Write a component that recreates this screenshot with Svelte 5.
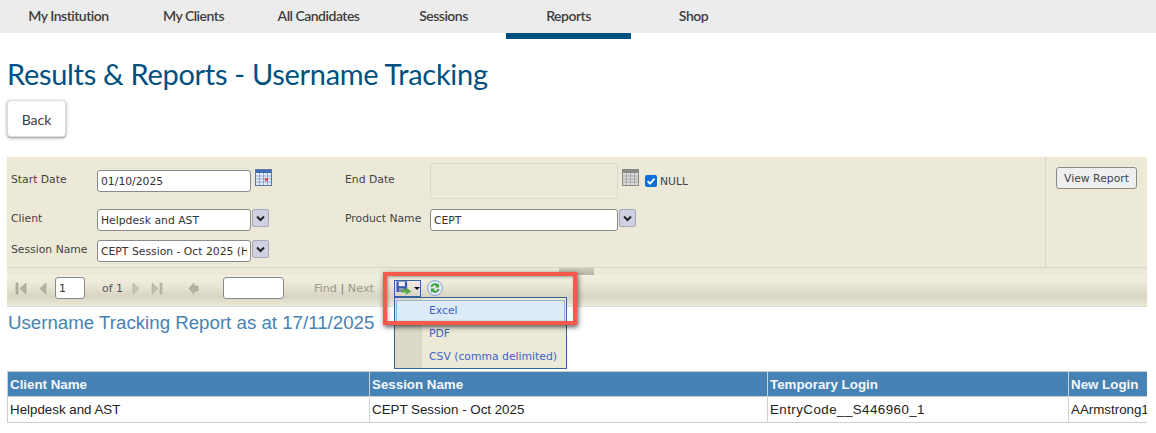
<script>
	const tabs = ['My Institution', 'My Clients', 'All Candidates', 'Sessions', 'Reports', 'Shop'];
	const active = 'Reports';
	const columns = [
		{ name: 'Client Name', width: 362, value: 'Helpdesk and AST' },
		{ name: 'Session Name', width: 398, value: 'CEPT Session - Oct 2025' },
		{ name: 'Temporary Login', width: 301, value: 'EntryCode__S446960_1' },
		{ name: 'New Login', width: 79, value: 'AArmstrong1' }
	];
</script>

{#snippet calendar(grey)}
	<svg class="cal" width="17" height="17" viewBox="0 0 17 17">
		<rect x="0.5" y="0.5" width="16" height="16" fill={grey ? '#ddd' : '#e8eefa'} stroke={grey ? '#888' : '#5a78a8'} />
		<rect x="1" y="1" width="15" height="3" fill={grey ? '#8a8a8a' : '#3f6db5'} />
		<path d="M1 7h15M1 10h15M1 13h15M4.5 4v12M8.5 4v12M12.5 4v12" stroke={grey ? '#a8a8a8' : '#8fa8d4'} fill="none" />
		{#if !grey}<rect x="10" y="9" width="3" height="3" fill="#d9534f" />{/if}
	</svg>
{/snippet}

{#snippet dropdown()}
	<span class="drop">
		<svg width="9" height="7" viewBox="0 0 9 7"><path d="M1 1.500l3.500 3.500L8 1.500" fill="none" stroke="#222" stroke-width="2" /></svg>
	</span>
{/snippet}

<header class="tabs">
	{#each tabs as tab}
		<a class="tab" class:active={tab === active} href="#top">{tab}</a>
	{/each}
</header>

<h1>Results &amp; Reports - Username Tracking</h1>
<button class="back">Back</button>

<section class="report">
	<div class="params">
		<div class="grid">
			<span class="lbl">Start Date</span>
			<div class="cell">
				<input class="field" value="01/10/2025" />
				{@render calendar(false)}
			</div>
			<span class="lbl">End Date</span>
			<div class="cell">
				<input class="field tall" disabled />
				{@render calendar(true)}
				<span class="check">
					<svg width="12" height="12" viewBox="0 0 12 12"><rect width="12" height="12" rx="2" fill="#0a6fd6" /><path d="M2.500 6.200l2.500 2.500 4.500-5" fill="none" stroke="#fff" stroke-width="1.800" /></svg>
					NULL
				</span>
			</div>

			<span class="lbl">Client</span>
			<div class="cell tight">
				<input class="field" value="Helpdesk and AST" />
				{@render dropdown()}
			</div>
			<span class="lbl">Product Name</span>
			<div class="cell tight">
				<input class="field" value="CEPT" />
				{@render dropdown()}
			</div>

			<span class="lbl">Session Name</span>
			<div class="cell tight">
				<input class="field" value="CEPT Session - Oct 2025 (Helpdesk)" />
				{@render dropdown()}
			</div>
		</div>
		<div class="submit">
			<button class="view">View Report</button>
		</div>
	</div>

	<div class="split"><span class="handle"></span></div>

	<div class="toolbar">
		<svg class="nav first" width="12" height="13" viewBox="0 0 12 13"><path d="M1 1h2v11H1zM11 1v11L5 6.500z" fill="#b4b2a6" stroke="#9c9a8e" stroke-width=".6" /></svg>
		<svg class="nav prev" width="8" height="13" viewBox="0 0 8 13"><path d="M7 1v11L1 6.500z" fill="#b4b2a6" stroke="#9c9a8e" stroke-width=".6" /></svg>
		<input class="page" value="1" />
		<span class="of">of 1</span>
		<svg class="nav next" width="8" height="13" viewBox="0 0 8 13"><path d="M1 1v11L7 6.500z" fill="#c8c6ba" stroke="#a8a69a" stroke-width=".6" /></svg>
		<svg class="nav last" width="12" height="13" viewBox="0 0 12 13"><path d="M1 1v11L7 6.500zM9 1h2v11H9z" fill="#c0beb2" stroke="#a8a69a" stroke-width=".6" /></svg>
		<svg class="nav backarrow" width="11" height="13" viewBox="0 0 11 13"><path d="M6 1L1 6.500 6 12V9h4V4H6z" fill="#b4b2a6" stroke="#9c9a8e" stroke-width=".6" /></svg>
		<input class="find" />
		<span class="findnext">Find <b>|</b> Next</span>
		<span class="export">
			<svg width="18" height="16" viewBox="0 0 18 16">
				<rect x="0.5" y="0.5" width="12" height="12" fill="#3a55b4" />
				<rect x="3" y="1" width="7" height="5" fill="#eeeef6" />
				<rect x="3" y="8" width="6" height="4" fill="#8d94b8" />
				<path d="M6 9.500h5V7l6 5-6 4v-3H6z" fill="#5aa84a" />
			</svg>
			<i class="caret"></i>
		</span>
		<svg class="refresh" width="16" height="16" viewBox="0 0 16 16">
			<circle cx="8" cy="8" r="7.500" fill="#dfe8f6" stroke="#8aa4cf" />
			<path d="M3.500 7a4.500 4.500 0 0 1 7.500-2.500l1-1v4h-4l1.400-1.400A2.800 2.800 0 0 0 5.300 7z" fill="#3fa03a" />
			<path d="M12.500 9a4.500 4.500 0 0 1-7.500 2.500l-1 1v-4h4l-1.400 1.400A2.800 2.800 0 0 0 10.700 9z" fill="#3fa03a" />
		</svg>
	</div>

	<h2>Username Tracking Report as at 17/11/2025</h2>

	<div class="tablewrap">
		<table>
			<thead>
				<tr>
					{#each columns as col}
						<th style="width: {col.width}px">{col.name}</th>
					{/each}
				</tr>
			</thead>
			<tbody>
				<tr>
					{#each columns as col}
						<td>{col.value}</td>
					{/each}
				</tr>
			</tbody>
		</table>
	</div>

	<ul class="menu">
		<li class="hover">Excel</li>
		<li>PDF</li>
		<li>CSV (comma delimited)</li>
	</ul>
	<div class="callout"></div>
</section>

<style>
	:global(body) {
		margin: 0;
		background: #fff;
		overflow: hidden;
	}

	.tabs {
		display: flex;
		height: 33px;
		padding-left: 6px;
		background: #ececec;
	}

	.tab {
		width: 125px;
		text-align: center;
		font: 600 14px/32px Lato, "Noto Sans", sans-serif;
		letter-spacing: -0.5px;
		color: #3d3d3d;
		text-decoration: none;
	}

	.tab.active {
		box-shadow: 0 6px 0 #00507f;
	}

	h1 {
		margin: 22px 0 0 7px;
		height: 45px;
		font: 400 29px/38px Lato, "Noto Sans", sans-serif;
		letter-spacing: -0.3px;
		color: #00507f;
	}

	.back {
		display: block;
		box-sizing: border-box;
		width: 59px;
		height: 37px;
		margin-left: 7px;
		padding: 2px 0 0;
		background: #fff;
		border: 1px solid #ddd;
		border-radius: 4px;
		box-shadow: 0 1px 3px rgba(0, 0, 0, 0.45);
		font: 400 14px Lato, "Noto Sans", sans-serif;
		color: #3d3d3d;
	}

	.report {
		position: relative;
		margin: 20px 9px 0 7px;
		font-family: "DejaVu Sans", Verdana, sans-serif;
		font-size: 11px;
	}

	.params {
		display: flex;
		height: 110px;
		background: #ece9d8;
		border-bottom: 1px solid #d8d5c6;
	}

	.grid {
		flex: 1;
		display: grid;
		grid-template-columns: 86px 248px 85px 1fr;
		grid-template-rows: 48px 30px 32px;
		align-items: center;
		padding-left: 4px;
		border-right: 1px solid #d8d5c6;
	}

	.lbl {
		color: #444;
		font-size: 10.800px;
		margin-top: -4px;
	}

	.cell {
		display: flex;
		align-items: center;
		gap: 4px;
	}

	.cell.tight {
		gap: 1px;
	}

	.field {
		box-sizing: border-box;
		width: 154px;
		height: 22px;
		padding: 0 3px;
		margin: 0;
		background: #fff;
		border: 1px solid #8a8a8a;
		border-radius: 3px;
		font: 10.800px "DejaVu Sans", Verdana, sans-serif;
		color: #333;
	}

	.cell:nth-child(4) .field,
	.cell:nth-child(8) .field {
		width: 188px;
	}

	.field.tall {
		height: 36px;
		background: #ece9d8;
		border-color: #dcd9ca;
	}

	.cal {
		margin-top: -7px;
	}

	.check {
		display: flex;
		align-items: center;
		gap: 3px;
		margin-left: 2px;
		color: #444;
		font-size: 10.800px;
	}

	.drop {
		display: flex;
		align-items: center;
		justify-content: center;
		box-sizing: border-box;
		width: 17px;
		height: 18px;
		margin-top: -4px;
		background: #cfd0e2;
		border: 1px solid #a8a8b8;
		border-radius: 2px;
	}

	.submit {
		box-sizing: border-box;
		width: 101px;
		padding: 10px 0 0 10px;
	}

	.view {
		box-sizing: border-box;
		width: 81px;
		height: 22px;
		padding: 0;
		background: #efefef;
		border: 1px solid #8a8a8a;
		border-radius: 3px;
		font: 10.800px "DejaVu Sans", Verdana, sans-serif;
		color: #444;
	}

	.split {
		position: relative;
		height: 7px;
		background: #ece9d8;
	}

	.handle {
		position: absolute;
		left: 552px;
		top: 0;
		width: 35px;
		height: 7px;
		background: linear-gradient(#d0cdbe, #b4b2a6);
	}

	.toolbar {
		display: flex;
		align-items: center;
		box-sizing: border-box;
		height: 32px;
		padding-bottom: 5px;
		background: linear-gradient(#f3f0e2 0%, #ebe8d8 30%, #d8d4c4 70%, #ece9d8 100%);
		border-bottom: 1px solid #dedbd0;
		color: #555;
	}

	.nav {
		flex: none;
	}

	.first { margin-left: 8px; }
	.prev { margin-left: 12px; }

	.page {
		box-sizing: border-box;
		width: 30px;
		height: 22px;
		margin: 0 0 0 8px;
		padding: 0 3px;
		background: #fff;
		border: 1px solid #8a8a8a;
		border-radius: 3px;
		font: 10.800px "DejaVu Sans", Verdana, sans-serif;
		color: #333;
	}

	.of { margin-left: 17px; width: 21px; white-space: nowrap; }
	.next { margin-left: 9px; }
	.last { margin-left: 11px; }
	.backarrow { margin-left: 25px; }

	.find {
		box-sizing: border-box;
		width: 61px;
		height: 22px;
		margin: 0 0 0 24px;
		background: #fff;
		border: 1px solid #8a8a8a;
		border-radius: 3px;
	}

	.findnext {
		margin-left: 30px;
		width: 60px;
		white-space: nowrap;
		color: #9a9888;
		font-size: 11.200px;
	}

	.findnext b {
		color: #777;
		font-weight: 400;
	}

	.export {
		display: flex;
		align-items: center;
		gap: 2px;
		box-sizing: border-box;
		width: 27px;
		height: 17px;
		margin-left: 20px;
		padding-left: 1px;
		border: 1px solid #33659a;
	}

	.caret {
		width: 0;
		height: 0;
		border: 3px solid transparent;
		border-top: 3px solid #111;
		border-bottom: 0;
	}

	.refresh {
		margin-left: 6px;
	}

	h2 {
		margin: 0;
		height: 64px;
		padding: 5px 0 0 1px;
		box-sizing: border-box;
		font: 400 18.700px/22px "Liberation Sans", Arial, sans-serif;
		color: #4682b4;
	}

	.tablewrap {
		overflow: hidden;
	}

	table {
		width: 1140px;
		table-layout: fixed;
		border-collapse: collapse;
		font-family: "Liberation Sans", Arial, sans-serif;
		font-size: 13.330px;
	}

	th, td {
		box-sizing: border-box;
		padding: 0 2px;
		border: 1px solid #cfcfcf;
		text-align: left;
		white-space: nowrap;
		overflow: hidden;
	}

	th {
		height: 25px;
		background: #4682b4;
		color: #f4f8fb;
	}

	td {
		height: 26px;
		color: #222;
	}

	td:nth-child(3) {
		letter-spacing: 0.45px;
	}

	.menu {
		position: absolute;
		left: 387px;
		top: 140px;
		box-sizing: border-box;
		width: 173px;
		height: 72px;
		margin: 0;
		padding: 2px 1px 0;
		list-style: none;
		background: linear-gradient(90deg, #dcd9c8 27px, #ece9d8 27px);
		border: 1px solid #33659a;
		font-size: 10.800px;
		color: #3f63c4;
	}

	.menu li {
		box-sizing: border-box;
		height: 23px;
		padding-left: 33px;
		line-height: 21px;
	}

	.menu li.hover {
		padding-left: 32px;
		line-height: 19px;
		background: #dcebf5;
		border: 1px solid #9ab4cc;
	}

	.callout {
		position: absolute;
		left: 376px;
		top: 115px;
		box-sizing: border-box;
		width: 194px;
		height: 53px;
		border: 4px solid #f55a4a;
		box-shadow: 1px 2px 5px rgba(0, 0, 0, 0.65), inset 1px 1px 3px rgba(0, 0, 0, 0.35);
	}
</style>
